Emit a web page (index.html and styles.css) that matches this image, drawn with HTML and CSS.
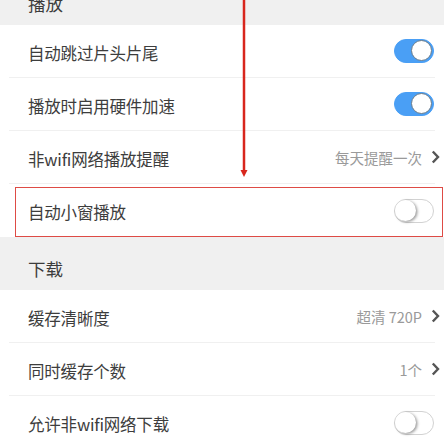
FILE: index.html
```html
<!DOCTYPE html>
<html lang="zh-CN">
<head>
<meta charset="utf-8">
<link rel="stylesheet" href="styles.css">
</head>
<body>
<div class="page">
  <div class="section-head"><span>播放</span></div>
  <div class="group">
    <div class="row"><span class="label">自动跳过片头片尾</span><span class="switch on"><span class="knob"></span></span></div>
    <div class="row"><span class="label">播放时启用硬件加速</span><span class="switch on"><span class="knob"></span></span></div>
    <div class="row"><span class="label">非wifi网络播放提醒</span><span class="value">每天提醒一次<svg class="chev" width="9" height="14" viewBox="0 0 9 14"><polyline points="1.8,1.5 7,7 1.8,12.5" fill="none" stroke="#555" stroke-width="2.4"/></svg></span></div>
    <div class="row last"><span class="label">自动小窗播放</span><span class="switch"><span class="knob"></span></span></div>
  </div>
  <div class="section-head"><span>下载</span></div>
  <div class="group">
    <div class="row"><span class="label">缓存清晰度</span><span class="value">超清 720P<svg class="chev" width="9" height="14" viewBox="0 0 9 14"><polyline points="1.8,1.5 7,7 1.8,12.5" fill="none" stroke="#555" stroke-width="2.4"/></svg></span></div>
    <div class="row"><span class="label">同时缓存个数</span><span class="value">1个<svg class="chev" width="9" height="14" viewBox="0 0 9 14"><polyline points="1.8,1.5 7,7 1.8,12.5" fill="none" stroke="#555" stroke-width="2.4"/></svg></span></div>
    <div class="row last"><span class="label">允许非wifi网络下载</span><span class="switch"><span class="knob"></span></span></div>
  </div>
  <div class="highlight"></div>
  <div class="arrow">
    <svg width="10" height="180" viewBox="0 0 10 180"><line x1="5" y1="0" x2="5" y2="172" stroke="#d8261d" stroke-width="2.5"/><path d="M1.5 170 L5 177 L8.5 170 Z" fill="#d8261d"/></svg>
  </div>
</div>
</body>
</html>
```
FILE: styles.css
```css
html, body {
  margin: 0;
  padding: 0;
  background: #f0f0f0;
  overflow: hidden;
}
.page {
  position: relative;
  margin-top: -28px;
  font-family: "Noto Sans CJK SC", "Noto Sans", sans-serif;
  color: #3d3d3d;
}
.section-head {
  height: 53px;
  box-sizing: border-box;
  display: flex;
  align-items: flex-end;
  padding: 0 0 9px 28px;
  font-size: 17.5px;
  color: #3c3c3c;
  background: #f0f0f0;
}
.group {
  background: #fff;
}
.row {
  height: 53px;
  box-sizing: border-box;
  margin: 0 9px;
  padding: 3px 0 0 19px;
  display: flex;
  align-items: center;
  justify-content: space-between;
  border-bottom: 1px solid #f0f0f0;
}
.row.last {
  border-bottom: none;
}
.label {
  font-size: 16.5px;
  letter-spacing: -0.2px;
}
.value {
  font-size: 14.5px;
  color: #9a9a9a;
  display: flex;
  align-items: center;
  margin-top: -3px;
  margin-right: -5px;
}
.chev {
  display: block;
  margin-left: 9px;
}
.switch {
  width: 40px;
  height: 24px;
  box-sizing: border-box;
  border-radius: 12px;
  border: 1.5px solid #d2d2d2;
  background: #fff;
  position: relative;
  margin-top: -3px;
  margin-right: 1px;
}
.switch .knob {
  position: absolute;
  top: 0;
  left: 0;
  width: 21px;
  height: 21px;
  box-sizing: border-box;
  border-radius: 50%;
  background: #fff;
  box-shadow: 1.5px 1px 3px rgba(0,0,0,0.4);
}
.switch.on {
  background: #4a9ff5;
  border-color: #4a9ff5;
}
.switch.on .knob {
  left: 16px;
  border: 1px solid #6d7d8a;
  box-shadow: none;
}
.highlight {
  position: absolute;
  left: 15px;
  right: 1px;
  top: 215px;
  height: 50px;
  box-sizing: border-box;
  border: 1.5px solid #de4b45;
}
.arrow {
  position: absolute;
  left: 239px;
  top: 28px;
  line-height: 0;
}
.arrow svg {
  display: block;
}
```
